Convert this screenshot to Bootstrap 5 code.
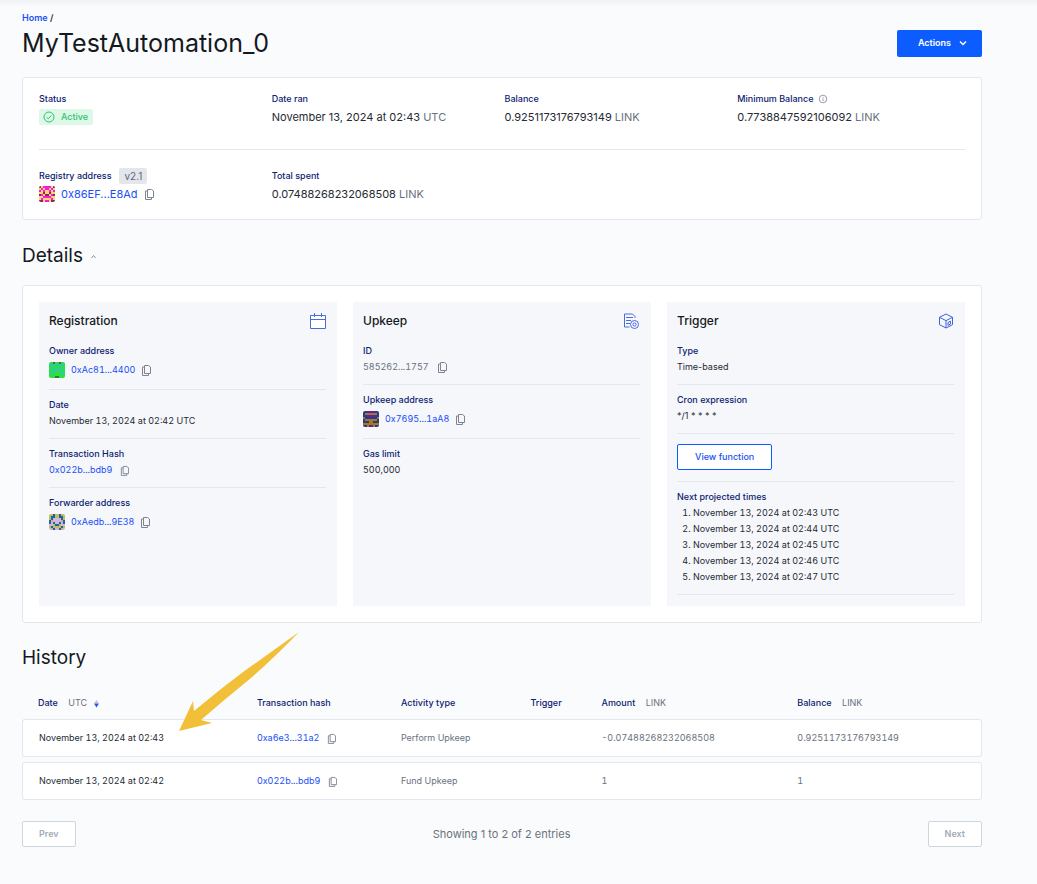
<!DOCTYPE html>
<html lang="en">
<head>
<meta charset="utf-8">
<meta name="viewport" content="width=device-width, initial-scale=1">
<title>MyTestAutomation_0</title>
<link href="https://cdn.jsdelivr.net/npm/bootstrap@5.3.0/dist/css/bootstrap.min.css" rel="stylesheet">
<style>
  :root { --ink:#141921; --label:#0d2270; --muted-ink:#6a717e; --link:#1a50f5; --line:#e4e8ee; --panel:#f5f7fb; }
  body { background:#fafbfd; color:#252a33; font-family:Inter, "Liberation Sans", sans-serif; font-size:9px; line-height:16px; min-height:100vh; }
  .top-shade { height:6px; background:linear-gradient(#f1f2f4, #fafbfd); }
  .page { padding:4px 55px 24px 22px; }
  a { color:var(--link); text-decoration:none; }
  h1, h2, h3 { color:var(--ink); margin:0; }
  h1 { font-size:25px; line-height:34px; font-weight:400; }
  h2 { font-size:19px; line-height:28px; font-weight:400; }
  h3 { font-size:12px; line-height:20px; font-weight:500; }
  .crumbs { font-weight:600; }
  .btn { font-size:9px; line-height:16px; border-radius:2px; }
  .btn-actions { background:#0d5cff; color:#fff; font-weight:600; padding:5px 15px 6px 21px; margin-top:20px; }
  .btn-actions:hover { background:#084be0; color:#fff; }
  .box { background:#fff; border:1px solid var(--line); border-radius:3px; }
  .summary { padding:13px 16px 15px; margin-top:17px; }
  .summary-row { display:grid; grid-template-columns:repeat(4, 1fr); column-gap:5px; }
  .summary-row + .summary-row { border-top:1px solid var(--line); margin-top:22px; padding-top:18px; }
  .term { color:var(--label); font-weight:500; height:16px; }
  .summary dd { font-size:11px; line-height:20px; height:20px; }
  .soft { color:var(--muted-ink); }
  .digits { font-variant-numeric:tabular-nums; }
  .status { background:#dcf8e6; color:#35c172; font-size:9px; font-weight:500; line-height:16px; border-radius:2px; padding:0 5px 0 4px; gap:6px; }
  .version { background:#e3e6ec; color:#5f6673; font-size:10px; line-height:16px; border-radius:2px; padding:0 5px; }
  .details-head { margin:22px 0 15px; }
  .panels { display:grid; grid-template-columns:repeat(3, 1fr); gap:16px; padding:16px; }
  .panel { background:var(--panel); padding:9px 11px 11px 10px; }
  .panel-head { margin-bottom:12px; }
  .panel-head svg { display:block; }
  .panel-head { height:20px; }
  .entry { padding:7px 0 9px; }
  .entry + .entry { border-top:1px solid var(--line); }
  .panel-head + div > .entry:first-child { padding-top:0; }
  .entry.button-entry { padding:10px 0 11px; }
  .entry.ruled { border-bottom:1px solid var(--line); }
  .with-avatar { height:21px; gap:6px; }
  .avatar { width:16px; height:16px; border-radius:2px; flex:none; }
  .btn-view { background:#fff; border:1px solid #0d5cff; color:var(--link); font-weight:500; padding:4px 17px; display:block; }
  .copy { border:0; padding:0; background:none; line-height:0; color:#7d8492; }
  ol.times { padding-left:16px; margin:0; }
  .history { margin-top:21px; }
  .history h2 { margin-bottom:17px; }
  .log { border-collapse:separate; border-spacing:0 5px; table-layout:fixed; width:100%; }
  .log th { color:var(--label); font-weight:500; padding:0 0 2px 16px; line-height:18px; }
  .log th span { font-weight:400; margin-left:8px; }
  .log td { background:#fff; border:solid var(--line); border-width:1px 0; padding:10px 0 10px 16px; color:var(--muted-ink); }
  .log td:first-child { border-left-width:1px; border-radius:3px 0 0 3px; color:#252a33; }
  .log td:last-child { border-right-width:1px; border-radius:0 3px 3px 0; }
  .c1 { width:22.8%; } .c2 { width:15%; } .c3 { width:13.5%; } .c4 { width:7.4%; } .c5 { width:20.4%; }
  .btn-page, .btn-page:disabled { background:#fff; border:1px solid #cfd5de; color:#a3abb8; font-weight:600; padding:4px 16px; opacity:1; }
  .showing { font-size:11px; }
  .pointer { position:absolute; left:157px; top:-12px; pointer-events:none; }
</style>
</head>
<body>
<svg class="d-none" aria-hidden="true">
  <symbol id="copy" viewBox="0 0 10 12"><path d="M3.500 1.500h4L9.500 3v6.500h-6zM3.500 3H1.500v8.500h6v-2" fill="none" stroke="currentColor" stroke-linejoin="round"/></symbol>
</svg>
<div class="top-shade"></div>
<div class="page">
  <header class="d-flex justify-content-between align-items-start">
    <div>
      <nav class="crumbs" aria-label="Breadcrumb"><a href="#">Home</a> /</nav>
      <h1>MyTestAutomation_0</h1>
    </div>
    <button class="btn btn-actions border-0 d-flex align-items-center gap-2" type="button">Actions
      <svg width="8" height="8" viewBox="0 0 8 8" aria-hidden="true"><path d="M1 2.500l3 3 3-3" fill="none" stroke="#fff" stroke-width="1.500"/></svg>
    </button>
  </header>

  <section class="box summary">
    <div class="summary-row">
      <dl class="m-0"><dt class="term">Status</dt>
        <dd class="m-0 d-flex align-items-center"><span class="status d-inline-flex align-items-center"><svg width="12" height="12" viewBox="0 0 12 12" aria-hidden="true"><circle cx="6" cy="6" r="5" fill="none" stroke="currentColor"/><path d="M3.700 6.200l1.600 1.500 3-3.200" fill="none" stroke="currentColor"/></svg>Active</span></dd></dl>
      <dl class="m-0"><dt class="term">Date ran</dt><dd class="m-0">November 13, 2024 at 02:43 <span class="soft">UTC</span></dd></dl>
      <dl class="m-0"><dt class="term">Balance</dt><dd class="m-0">0.9251173176793149 <span class="soft">LINK</span></dd></dl>
      <dl class="m-0"><dt class="term d-flex align-items-center gap-1">Minimum Balance
        <svg width="10" height="10" viewBox="0 0 10 10" aria-hidden="true"><circle cx="5" cy="5" r="3.800" fill="none" stroke="#7d8492" stroke-width=".8"/><path d="M5 4.500v2.500M5 2.800v1" stroke="#7d8492" stroke-width=".8"/></svg></dt>
        <dd class="m-0">0.7738847592106092 <span class="soft">LINK</span></dd></dl>
    </div>
    <div class="summary-row">
      <dl class="m-0"><dt class="term d-flex align-items-center">Registry address <span class="version ms-2 fw-normal">v2.1</span></dt>
        <dd class="m-0 d-flex align-items-center with-avatar"><svg class="avatar" data-colors="#f9d56e,#f51be0,#8d2463" data-rows="20111102 01011010 10100101 00200200 21022012 00111100 01000010 22011022"></svg><a href="#">0x86EF...E8Ad</a><button class="copy" type="button" aria-label="Copy registry address"><svg width="10" height="12"><use href="#copy"/></svg></button></dd></dl>
      <dl class="m-0"><dt class="term">Total spent</dt><dd class="m-0">0.07488268232068508 <span class="soft">LINK</span></dd></dl>
    </div>
  </section>

  <div class="details-head d-flex align-items-center gap-2">
    <h2>Details</h2>
    <svg width="5" height="5" viewBox="0 0 5 5" aria-hidden="true"><path d="M.5 4L2.500 1.500 4.500 4" fill="none" stroke="#8d94a0"/></svg>
  </div>

  <section class="box panels">
    <article class="panel">
      <div class="panel-head d-flex justify-content-between align-items-center"><h3>Registration</h3>
        <svg width="16" height="18" viewBox="0 0 16 18" aria-hidden="true" fill="none" stroke="#4a6ae0"><path fill="#fff" d="M.5 3.500h15v13H.5z"/><path d="M.5 7.500h15M4.500 1v4M11.500 1v4"/></svg></div>
      <div>
        <div class="entry"><div class="term">Owner address</div><div class="d-flex align-items-center with-avatar digits"><svg class="avatar" data-colors="#2fce8b,#25e82b,#55700c" data-rows="10200201 00000000 10011001 01000010 10000001 00011000 10111101 11022011"></svg><a href="#">0xAc81...4400</a><button class="copy" type="button" aria-label="Copy owner address"><svg width="10" height="12"><use href="#copy"/></svg></button></div></div>
        <div class="entry"><div class="term">Date</div><div class="digits">November 13, 2024 at 02:42 UTC</div></div>
        <div class="entry"><div class="term">Transaction Hash</div><div class="d-flex align-items-center digits"><a href="#">0x022b...bdb9</a><button class="copy ms-2" type="button" aria-label="Copy transaction hash"><svg width="9" height="11"><use href="#copy"/></svg></button></div></div>
        <div class="entry"><div class="term">Forwarder address</div><div class="d-flex align-items-center with-avatar digits"><svg class="avatar" data-colors="#c2ba68,#1b679b,#d5b4e5" data-rows="00100100 01100110 01222210 10222201 12122121 22011022 01000010 20122102"></svg><a href="#">0xAedb...9E38</a><button class="copy" type="button" aria-label="Copy forwarder address"><svg width="10" height="12"><use href="#copy"/></svg></button></div></div>
      </div>
    </article>
    <article class="panel">
      <div class="panel-head d-flex justify-content-between align-items-center"><h3>Upkeep</h3>
        <svg width="17" height="18" viewBox="0 0 17 18" aria-hidden="true" fill="none" stroke="#4a6ae0"><path d="M12 6V4.500L9.500 2H1.500v13h5M3 5.500h7M3 8.500h5M3 11.500h4"/><circle cx="11.500" cy="12.500" r="4"/><circle cx="11.500" cy="12.500" r="1.600"/></svg></div>
      <div>
        <div class="entry"><div class="term">ID</div><div class="d-flex align-items-center soft digits">585262...1757<button class="copy ms-2" type="button" aria-label="Copy ID"><svg width="10" height="12"><use href="#copy"/></svg></button></div></div>
        <div class="entry"><div class="term">Upkeep address</div><div class="d-flex align-items-center with-avatar digits"><svg class="avatar" data-colors="#a67b13,#263c94,#6619b7" data-rows="11222211 10000001 11222211 01111110 10000001 11100111 00000000 11022011"></svg><a href="#">0x7695...1aA8</a><button class="copy" type="button" aria-label="Copy upkeep address"><svg width="10" height="12"><use href="#copy"/></svg></button></div></div>
        <div class="entry"><div class="term">Gas limit</div><div class="digits">500,000</div></div>
      </div>
    </article>
    <article class="panel">
      <div class="panel-head d-flex justify-content-between align-items-center"><h3>Trigger</h3>
        <svg width="16" height="16" viewBox="0 0 16 16" aria-hidden="true" fill="none" stroke="#3f61dc"><path d="M8 1l6.500 3.300v7.400L8 15l-6.500-3.300V4.300zM1.500 4.300L8 7.600l6.500-3.300M8 7.600V15"/><path d="M10 9.500l2.500-1.300v2.800L10 12.300z"/></svg></div>
      <div>
        <div class="entry"><div class="term">Type</div><div>Time-based</div></div>
        <div class="entry"><div class="term">Cron expression</div><div>*/1 * * * *</div></div>
        <div class="entry button-entry"><button class="btn btn-view" type="button">View function</button></div>
        <div class="entry ruled"><div class="term">Next projected times</div>
          <ol class="times digits"><li>November 13, 2024 at 02:43 UTC</li><li>November 13, 2024 at 02:44 UTC</li><li>November 13, 2024 at 02:45 UTC</li><li>November 13, 2024 at 02:46 UTC</li><li>November 13, 2024 at 02:47 UTC</li></ol></div>
      </div>
    </article>
  </section>

  <section class="history position-relative">
    <h2>History</h2>
    <table class="log digits">
      <thead><tr>
        <th class="c1" scope="col">Date <span class="soft">UTC</span> <svg class="ms-1" width="5" height="8" viewBox="0 0 5 8" aria-hidden="true"><path d="M2.500 0L4.500 3h-4z" fill="#b9c2d4"/><path d="M0 3.500h5L2.500 7.500z" fill="#2456ea"/></svg></th>
        <th class="c2" scope="col">Transaction hash</th><th class="c3" scope="col">Activity type</th><th class="c4" scope="col">Trigger</th>
        <th class="c5" scope="col">Amount <span class="soft">LINK</span></th><th scope="col">Balance <span class="soft">LINK</span></th>
      </tr></thead>
      <tbody>
        <tr><td>November 13, 2024 at 02:43</td><td><div class="d-flex align-items-center"><a href="#">0xa6e3...31a2</a><button class="copy ms-2" type="button" aria-label="Copy transaction hash"><svg width="9" height="11"><use href="#copy"/></svg></button></div></td><td>Perform Upkeep</td><td></td><td>-0.07488268232068508</td><td>0.9251173176793149</td></tr>
        <tr><td>November 13, 2024 at 02:42</td><td><div class="d-flex align-items-center"><a href="#">0x022b...bdb9</a><button class="copy ms-2" type="button" aria-label="Copy transaction hash"><svg width="9" height="11"><use href="#copy"/></svg></button></div></td><td>Fund Upkeep</td><td></td><td>1</td><td>1</td></tr>
      </tbody>
    </table>
    <svg class="pointer" width="121" height="100" viewBox="0 0 121 100" aria-hidden="true"><path d="M120 0L64 40Q40 58 15 79L14 69L0 99L33 91L22 88Q46 67 72 46Q95 26 120 0z" fill="#f2bf38"/></svg>
  </section>

  <div class="d-flex justify-content-between align-items-center mt-3">
    <button class="btn btn-page" type="button" disabled>Prev</button>
    <span class="showing soft">Showing 1 to 2 of 2 entries</span>
    <button class="btn btn-page" type="button" disabled>Next</button>
  </div>
</div>
<script src="https://cdn.jsdelivr.net/npm/bootstrap@5.3.0/dist/js/bootstrap.bundle.min.js"></script>
<script>
  // Address identicons: an 8x8 grid, each digit picks a colour.
  document.querySelectorAll('svg.avatar').forEach(function (svg) {
    var colors = svg.dataset.colors.split(',');
    svg.setAttribute('viewBox', '0 0 8 8');
    svg.setAttribute('shape-rendering', 'crispEdges');
    svg.setAttribute('aria-hidden', 'true');
    svg.innerHTML = svg.dataset.rows.split(' ').map(function (row, y) {
      return row.split('').map(function (c, x) {
        return '<rect x="' + x + '" y="' + y + '" width="1" height="1" fill="' + colors[c] + '"/>';
      }).join('');
    }).join('');
  });
</script>
</body>
</html>
